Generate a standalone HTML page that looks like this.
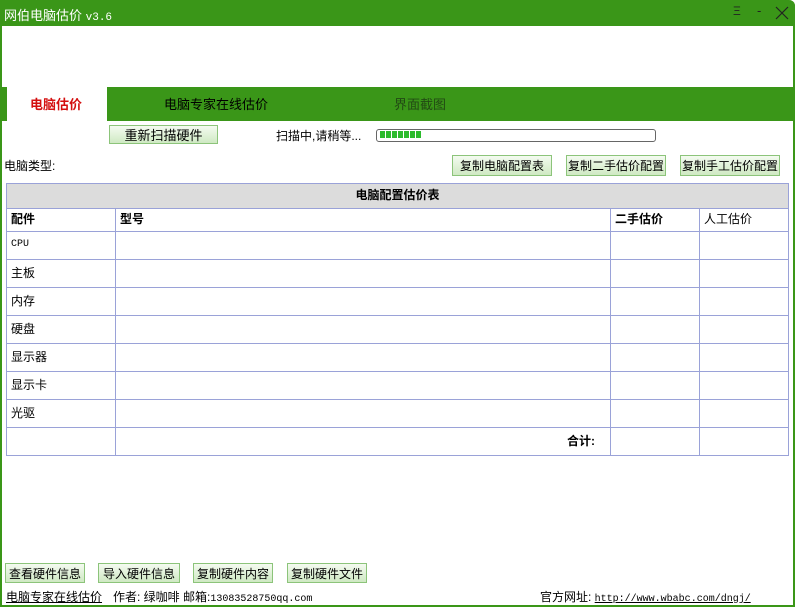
<!DOCTYPE html><html><head><meta charset="utf-8"><style>
body{margin:0;width:795px;height:609px;overflow:hidden;background:#fff;font-family:"Liberation Sans","Noto Sans CJK SC",sans-serif;font-size:12px;color:#000;position:relative}
.a{position:absolute}
.win{position:absolute;left:0;top:0;width:791px;height:605px;border:2px solid #3a9618;border-top:none;border-radius:0 6px 0 0}
.btn{position:absolute;height:19px;border:1px solid #8cc47a;background:linear-gradient(#f4fbf0,#cfe9c3);font-size:12px;line-height:19px;text-align:center;box-sizing:border-box}
.h{position:absolute;left:6px;width:783px;height:1px;background:#9aa2d8}
.v{position:absolute;top:208px;width:1px;height:248px;background:#9aa2d8}
.c{position:absolute;left:11px;font-size:12px;line-height:14px}
</style></head><body>
<div class="win"></div>
<div class="a" style="left:0;top:0;width:795px;height:26px;background:#3a9618;border-radius:0 6px 0 0"></div>
<div class="a" style="left:4px;top:5px;color:#fff;font-size:13px">网伯电脑估价 <span style="font-family:'Liberation Mono',monospace;font-size:11px">v3.6</span></div>
<div class="a" style="left:733px;top:4px;color:#222;font-size:12px">Ξ</div>
<div class="a" style="left:757px;top:3px;color:#222;font-size:13px">-</div>
<svg class="a" style="left:775px;top:6px" width="14" height="14"><path d="M1 1L13 13M13 1L1 13" stroke="#222" stroke-width="1.2"/></svg>
<div class="a" style="left:0;top:87px;width:793px;height:34px;background:#3a9618"></div>
<div class="a" style="left:7px;top:87px;width:100px;height:34px;background:#fff"></div>
<div class="a" style="left:30px;top:94px;color:#d41010;font-weight:bold;font-size:13px">电脑估价</div>
<div class="a" style="left:164px;top:94px;font-size:13px">电脑专家在线估价</div>
<div class="a" style="left:394px;top:94px;font-size:13px;color:#224a14">界面截图</div>
<div class="btn" style="left:109px;top:125px;width:109px;font-size:13px">重新扫描硬件</div>
<div class="a" style="left:276px;top:127px;font-size:12px">扫描中,请稍等...</div>
<div class="a" style="left:376px;top:129px;width:278px;height:11px;border:1px solid #666;border-radius:3px"></div>
<div class="a" style="left:380px;top:131px;width:41px;height:7px;background:repeating-linear-gradient(90deg,#2cbb2c 0 5px,#fff 5px 6px)"></div>
<div class="a" style="left:4px;top:157px">电脑类型:</div>
<div class="btn" style="left:452px;top:155px;width:100px;height:21px;line-height:21px">复制电脑配置表</div>
<div class="btn" style="left:566px;top:155px;width:100px;height:21px;line-height:21px">复制二手估价配置</div>
<div class="btn" style="left:680px;top:155px;width:100px;height:21px;line-height:21px">复制手工估价配置</div>

<div class="a" style="left:6px;top:183px;width:783px;height:25px;background:#dcdcdc"></div>
<div class="a" style="left:6px;top:183px;width:781px;height:271px;border:1px solid #9aa2d8"></div>
<div class="h" style="top:208px"></div><div class="h" style="top:231px"></div><div class="h" style="top:259px"></div><div class="h" style="top:287px"></div><div class="h" style="top:315px"></div><div class="h" style="top:343px"></div><div class="h" style="top:371px"></div><div class="h" style="top:399px"></div><div class="h" style="top:427px"></div>
<div class="v" style="left:115px"></div><div class="v" style="left:610px"></div><div class="v" style="left:699px"></div>
<div class="a" style="left:6px;width:783px;top:188px;text-align:center;font-weight:bold;line-height:14px">电脑配置估价表</div>
<div class="c" style="top:212px;font-weight:bold">配件</div>
<div class="c" style="left:120px;top:212px;font-weight:bold">型号</div>
<div class="c" style="left:615px;top:212px;font-weight:bold">二手估价</div>
<div class="c" style="left:704px;top:212px">人工估价</div>
<div class="c" style="top:238px;font-family:'Liberation Mono',monospace;font-size:10px">CPU</div>
<div class="c" style="top:266px">主板</div>
<div class="c" style="top:294px">内存</div>
<div class="c" style="top:322px">硬盘</div>
<div class="c" style="top:350px">显示器</div>
<div class="c" style="top:378px">显示卡</div>
<div class="c" style="top:406px">光驱</div>
<div class="c" style="left:567px;top:434px;font-weight:bold">合计:</div>

<div class="btn" style="left:5px;top:563px;width:80px;height:20px;line-height:20px">查看硬件信息</div>
<div class="btn" style="left:98px;top:563px;width:82px;height:20px;line-height:20px">导入硬件信息</div>
<div class="btn" style="left:193px;top:563px;width:80px;height:20px;line-height:20px">复制硬件内容</div>
<div class="btn" style="left:287px;top:563px;width:80px;height:20px;line-height:20px">复制硬件文件</div>
<div class="a" style="left:6px;top:588px;text-decoration:underline">电脑专家在线估价</div>
<div class="a" style="left:113px;top:588px">作者: 绿咖啡 邮箱:<span style="font-family:'Liberation Mono',monospace;font-size:10px">13083528750qq.com</span></div>
<div class="a" style="left:540px;top:588px">官方网址: <span style="font-family:'Liberation Mono',monospace;font-size:10px;text-decoration:underline">http://www.wbabc.com/dngj/</span></div>
</body></html>
